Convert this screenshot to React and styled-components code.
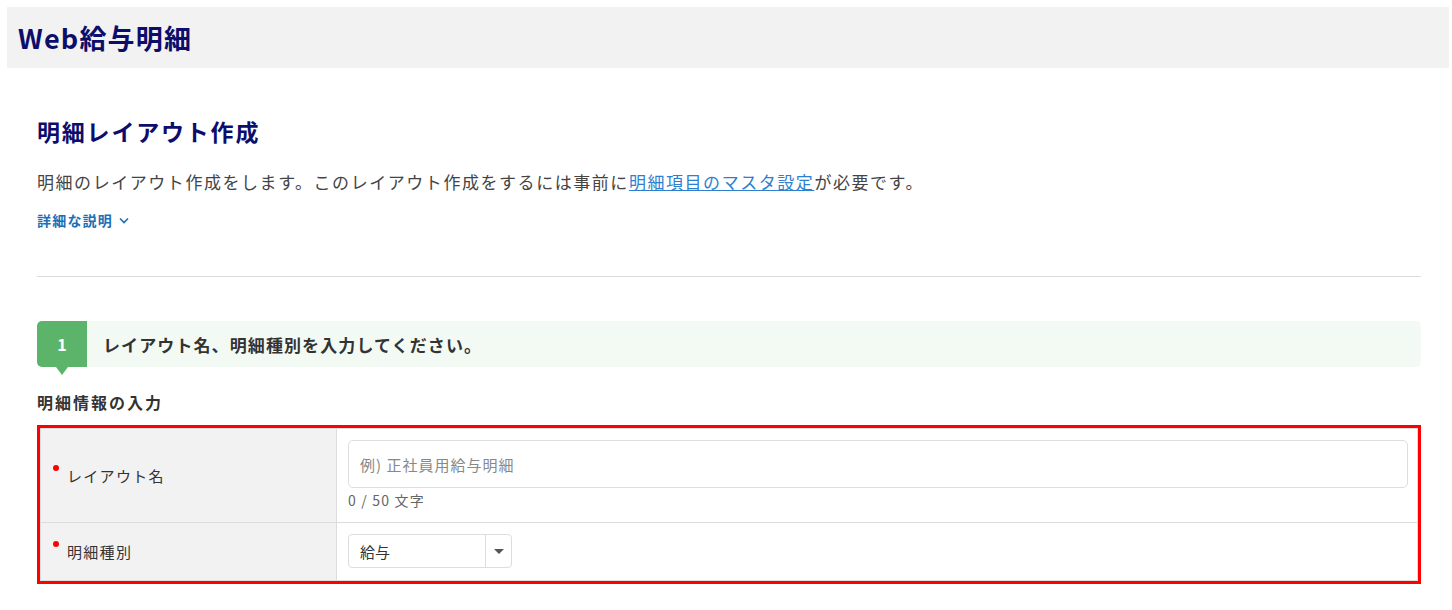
import styled, { createGlobalStyle } from "styled-components";

const GlobalStyle = createGlobalStyle`
    body {
        margin: 0;
        background: #fff;
        font-family: "Noto Sans CJK JP", "Noto Sans", sans-serif;
        color: #333;
    }
`;

const Page = styled.div`
    padding: 7px 3px 0 7px;
`;

const Header = styled.header`
    height: 61px;
    background: #f2f2f2;
    display: flex;
    align-items: center;
    padding-left: 11px;
`;

const AppTitle = styled.h1`
    margin: 0;
    font-size: 27px;
    font-weight: 700;
    color: #0d0d6b;
    letter-spacing: 1.2px;
`;

const Main = styled.main`
    padding: 45px 28px 0 30px;
`;

const PageTitle = styled.h2`
    margin: 0;
    font-size: 23px;
    line-height: 36px;
    font-weight: 700;
    color: #0d0d6b;
    letter-spacing: 1.8px;
`;

const Description = styled.p`
    margin: 21px 0 0;
    font-size: 17px;
    line-height: 24px;
    letter-spacing: 1.55px;
    color: #444;
`;

const Link = styled.a`
    color: #2f7fd0;
    text-decoration: underline;
    cursor: pointer;
`;

const DetailToggle = styled.button`
    margin-top: 16px;
    padding: 0;
    border: none;
    background: transparent;
    display: flex;
    align-items: center;
    gap: 5px;
    font-family: inherit;
    font-size: 14px;
    line-height: 20px;
    font-weight: 700;
    letter-spacing: 1.2px;
    color: #1a6fb5;
    cursor: pointer;
`;

const Divider = styled.hr`
    margin: 46px 0 0;
    border: none;
    border-top: 1px solid #dcdcdc;
`;

const StepBar = styled.div`
    margin-top: 44px;
    height: 46px;
    display: flex;
    align-items: center;
    background: #f3faf3;
    border-radius: 5px;
`;

const StepNumber = styled.div`
    position: relative;
    width: 50px;
    height: 100%;
    display: flex;
    align-items: center;
    justify-content: center;
    background: #5cb46a;
    border-radius: 5px 0 0 5px;
    color: #fff;
    font-size: 16px;
    font-weight: 700;

    &::after {
        content: "";
        position: absolute;
        left: 19px;
        bottom: -8px;
        border-left: 6px solid transparent;
        border-right: 6px solid transparent;
        border-top: 8px solid #5cb46a;
    }
`;

const StepText = styled.div`
    margin-left: 16px;
    font-size: 17px;
    font-weight: 700;
    letter-spacing: 1.1px;
    color: #333;
`;

const SectionTitle = styled.h3`
    margin: 23px 0 0;
    font-size: 16px;
    line-height: 24px;
    font-weight: 700;
    letter-spacing: 2px;
    color: #333;
`;

const FormFrame = styled.div`
    margin-top: 11px;
    border: 3px solid #ff0000;
`;

const FormTable = styled.div`
    border: 1px solid #dcdcdc;
`;

const Row = styled.div`
    display: grid;
    grid-template-columns: 296px 1fr;
    height: ${props => props.height}px;
    border-top: ${props => (props.first ? "none" : "1px solid #dcdcdc")};
`;

const LabelCell = styled.div`
    background: #f2f2f2;
    border-right: 1px solid #dcdcdc;
    display: flex;
    align-items: center;
    padding-left: 12px;
    font-size: 15px;
    letter-spacing: 1.3px;
    color: #333;
`;

const Required = styled.span`
    width: 6px;
    height: 6px;
    border-radius: 50%;
    background: #f00;
    margin-right: 8px;
    align-self: center;
    transform: translateY(-8px);
`;

const FieldCell = styled.div`
    padding: ${props => props.pad};
    display: flex;
    flex-direction: column;
    align-items: flex-start;
`;

const TextInput = styled.input`
    box-sizing: border-box;
    width: 100%;
    height: 48px;
    padding: 0 11px;
    border: 1px solid #ddd;
    border-radius: 5px;
    font-family: inherit;
    font-size: 15px;
    letter-spacing: 1px;
    color: #333;
    outline: none;

    &::placeholder {
        color: #888;
    }
`;

const Counter = styled.div`
    margin-top: 2px;
    font-size: 14px;
    line-height: 20px;
    color: #666;
    letter-spacing: 1.2px;
`;

const SelectBox = styled.div`
    box-sizing: border-box;
    width: 164px;
    height: 34px;
    display: flex;
    border: 1px solid #ddd;
    border-radius: 4px;
    background: #fff;
`;

const SelectValue = styled.div`
    flex: 1;
    display: flex;
    align-items: center;
    padding-left: 11px;
    font-size: 15px;
    color: #333;
`;

const SelectArrow = styled.div`
    width: 25px;
    border-left: 1px solid #ddd;
    display: flex;
    align-items: center;
    justify-content: center;

    &::before {
        content: "";
        border-left: 5px solid transparent;
        border-right: 5px solid transparent;
        border-top: 5px solid #555;
    }
`;

export default function App() {
    return (
        <Page>
            <GlobalStyle />
            <Header>
                <AppTitle>Web給与明細</AppTitle>
            </Header>
            <Main>
                <PageTitle>明細レイアウト作成</PageTitle>
                <Description>
                    明細のレイアウト作成をします。このレイアウト作成をするには事前に<Link>明細項目のマスタ設定</Link>が必要です。
                </Description>
                <DetailToggle>
                    詳細な説明
                    <svg width="12" height="12" viewBox="0 0 12 12" fill="none" stroke="#1a6fb5" strokeWidth="1.6">
                        <path d="M2 4.5 L6 8.5 L10 4.5" />
                    </svg>
                </DetailToggle>
                <Divider />
                <StepBar>
                    <StepNumber>1</StepNumber>
                    <StepText>レイアウト名、明細種別を入力してください。</StepText>
                </StepBar>
                <SectionTitle>明細情報の入力</SectionTitle>
                <FormFrame>
                    <FormTable>
                        <Row first height={93}>
                            <LabelCell>
                                <Required />
                                レイアウト名
                            </LabelCell>
                            <FieldCell pad="11px 9px 0 11px">
                                <TextInput placeholder="例) 正社員用給与明細" />
                                <Counter>0 / 50 文字</Counter>
                            </FieldCell>
                        </Row>
                        <Row height={57}>
                            <LabelCell>
                                <Required />
                                明細種別
                            </LabelCell>
                            <FieldCell pad="11px 9px 0 11px">
                                <SelectBox>
                                    <SelectValue>給与</SelectValue>
                                    <SelectArrow />
                                </SelectBox>
                            </FieldCell>
                        </Row>
                    </FormTable>
                </FormFrame>
            </Main>
        </Page>
    );
}
